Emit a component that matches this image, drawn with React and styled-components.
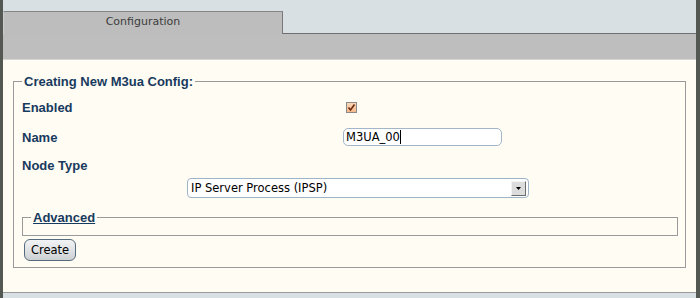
import React from "react";
import styled, { createGlobalStyle } from "styled-components";

const GlobalStyle = createGlobalStyle`
  html, body {
    margin: 0;
    padding: 0;
    background: #535853;
  }
  * {
    box-sizing: border-box;
  }
`;

const Frame = styled.div`
  display: flex;
  flex-direction: column;
  min-height: 298px;
  margin: 0 4px 0 3px;
  font-family: "DejaVu Sans", Verdana, sans-serif;
`;

const TabBar = styled.div`
  display: flex;
  align-items: flex-end;
  height: 34px;
  background: #d9e0e3;
`;

const Tab = styled.div`
  width: 280px;
  height: 23px;
  padding-top: 3px;
  background: #bdbdbd;
  border-top: 1px solid #858585;
  border-right: 1px solid #787878;
  border-left: 1px solid #cdcdcd;
  color: #3c3c3c;
  font-size: 11px;
  line-height: 14px;
  text-align: center;
`;

const TabFill = styled.div`
  flex: 1;
  height: 100%;
  border-bottom: 1px solid #6e6e6e;
`;

const Band = styled.div`
  height: 26px;
  background: #bebebe;
  border-bottom: 1px solid #d6d6d6;
`;

const Content = styled.div`
  flex: 1;
  background: #fffcf3;
  padding: 14px 10px 0 10px;
`;

const Fieldset = styled.fieldset`
  margin: 0;
  padding: ${(p) => (p.$inner ? "0 8px" : "0 7px 6px 8px")};
  border: 1px solid #999999;
  min-width: 0;
`;

const Legend = styled.legend`
  padding: 0 2px;
  font-family: "Liberation Sans", Arial, sans-serif;
  font-weight: bold;
  font-size: 13px;
  line-height: 15px;
  color: #173a5e;
  text-decoration: ${(p) => (p.$link ? "underline" : "none")};
`;

const Rows = styled.div`
  padding-top: 3px;
`;

const Row = styled.div`
  display: flex;
  align-items: center;
  height: ${(p) => p.$h}px;
`;

const Label = styled.div`
  width: 321px;
  font-family: "Liberation Sans", Arial, sans-serif;
  font-weight: bold;
  font-size: 13px;
  color: #173a5e;
`;

const CheckBox = styled.span`
  display: inline-flex;
  align-items: center;
  justify-content: center;
  width: 11px;
  height: 11px;
  margin: 0 0 0 3px;
  border: 1px solid #8a8a8a;
  background: linear-gradient(#fbd8b8, #f4b88a);
`;

const TextBox = styled.div`
  display: flex;
  align-items: center;
  width: 159px;
  height: 18px;
  padding-left: 2px;
  background: #ffffff;
  border: 1px solid #a2b5c9;
  border-radius: 5px;
  font-size: 11.5px;
  color: #000;
`;

const Caret = styled.span`
  display: inline-block;
  width: 1px;
  height: 14px;
  background: #000;
`;

const SelectRow = styled.div`
  padding-left: 165px;
`;

const Select = styled.div`
  display: flex;
  align-items: center;
  justify-content: space-between;
  width: 342px;
  height: 20px;
  padding: 0 2px 0 3px;
  background: #ffffff;
  border: 1px solid #a0b4c8;
  border-radius: 4px;
  font-size: 11.5px;
  color: #000;
`;

const ArrowButton = styled.span`
  display: flex;
  align-items: center;
  justify-content: center;
  width: 15px;
  height: 15px;
  background: #dcdcdc;
  border-top: 1px solid #f4f4f4;
  border-left: 1px solid #f4f4f4;
  border-right: 1px solid #6c6c6c;
  border-bottom: 1px solid #6c6c6c;
`;

const AdvancedBody = styled.div`
  height: 10px;
`;

const AdvancedWrap = styled.div`
  margin-top: 12px;
`;

const Button = styled.button`
  display: block;
  width: 52px;
  height: 22px;
  margin: 3px 0 0 2px;
  padding: 0;
  border: 1px solid #566b7e;
  border-radius: 6px;
  background: linear-gradient(#f2f3f4, #cdd1d4);
  font-family: "DejaVu Sans", Verdana, sans-serif;
  font-size: 11.5px;
  color: #000;
`;

const Footer = styled.div`
  height: 6px;
  background: #d9e0e3;
  border-top: 1px solid #9a9a9a;
`;

export default function App() {
  return (
    <>
      <GlobalStyle />
      <Frame>
        <TabBar>
          <Tab>Configuration</Tab>
          <TabFill />
        </TabBar>
        <Band />
        <Content>
          <Fieldset>
            <Legend>Creating New M3ua Config:</Legend>
            <Rows>
              <Row $h={30}>
                <Label>Enabled</Label>
                <CheckBox>
                  <svg width="9" height="9" viewBox="0 0 9 9">
                    <path d="M1.5 4.5 L3.5 7 L7.5 1.5" fill="none" stroke="#6a2a10" strokeWidth="1.6" />
                  </svg>
                </CheckBox>
              </Row>
              <Row $h={30}>
                <Label>Name</Label>
                <TextBox>
                  M3UA_00
                  <Caret />
                </TextBox>
              </Row>
              <Row $h={26}>
                <Label>Node Type</Label>
              </Row>
              <SelectRow>
                <Select>
                  <span>IP Server Process (IPSP)</span>
                  <ArrowButton>
                    <svg width="5" height="3" viewBox="0 0 5 3">
                      <path d="M0 0 H5 L2.5 3 Z" fill="#000" />
                    </svg>
                  </ArrowButton>
                </Select>
              </SelectRow>
            </Rows>
            <AdvancedWrap>
              <Fieldset $inner>
                <Legend $link>Advanced</Legend>
                <AdvancedBody />
              </Fieldset>
            </AdvancedWrap>
            <Button>Create</Button>
          </Fieldset>
        </Content>
        <Footer />
      </Frame>
    </>
  );
}
